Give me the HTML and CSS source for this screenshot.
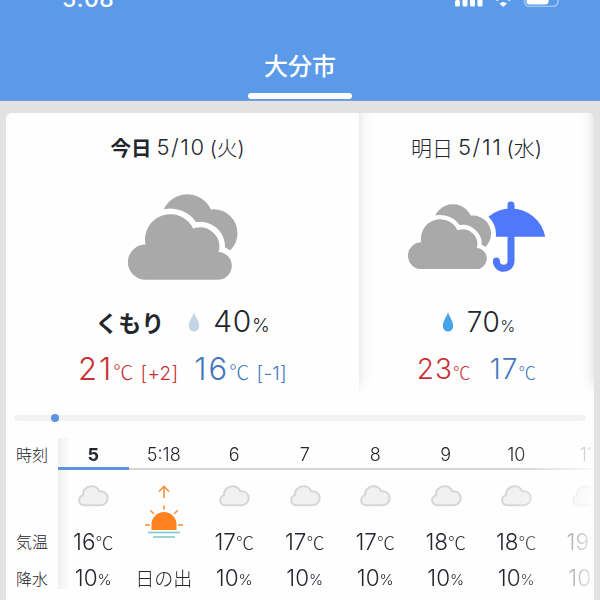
FILE: index.html
```
<!DOCTYPE html>
<html lang="ja">
<head>
  <meta charset="UTF-8" />
  <meta name="viewport" content="width=device-width, initial-scale=1.0" />
  <title>大分市の天気</title>
  <link rel="stylesheet" href="styles.css">
</head>
<body>
  <!-- Shared icons -->
  <svg class="icon-defs" width="0" height="0">
    <symbol id="clouds" viewBox="-0.600 0 110.600 86">
      <g fill="#a9a9a9">
        <circle cx="59" cy="26" r="26" />
        <circle cx="85.500" cy="39" r="24" />
        <path d="M40 26h46v26l14 6-30 5H40z" />
      </g>
      <path d="M17 86a17.500 17.500 0 0 1 0-35.500A25.500 25.500 0 0 1 65 34.500A19.500 19.500 0 0 1 90.500 58A14 14 0 0 1 89 86Z" fill="#a9a9a9" stroke="#fff" stroke-width="11.500" paint-order="stroke" />
    </symbol>
    <symbol id="drop" viewBox="0 0 12 20">
      <path d="M6 0C5 4.500.8 9 .8 14a5.200 5.600 0 0 0 10.400 0C11.200 9 7 4.500 6 0z" fill="currentColor" />
    </symbol>
    <symbol id="cloud" viewBox="0 0 32 22">
      <path d="M6.500 20.200a5 5 0 0 1-.6-9.800C5.400 5.500 9.500 1.300 14.500 1.300c3.600 0 6.500 2 7.700 5 4.600-.7 8.500 2.400 8.500 6.800 0 4-3 7.100-7 7.100z" fill="#f1f1f1" stroke="#d6d6d6" stroke-width="2" />
    </symbol>
  </svg>

  <!-- Header -->
  <header class="header">
    <div class="status-bar">
      <span class="clock">5:08</span>
      <svg class="status-icons" width="108" height="24" viewBox="0 0 108 24" fill="#fff">
        <rect x="0" y="17" width="5" height="6.500" rx="1.500" />
        <rect x="7.500" y="13" width="5" height="10.500" rx="1.500" />
        <rect x="15" y="9" width="5" height="14.500" rx="1.500" />
        <rect x="22.500" y="5" width="5" height="18.500" rx="1.500" />
        <path d="M44.500 20.500q3.700-3 7.400 0L48.200 24z" />
        <path d="M41.300 17.300q6.900-6 13.800 0" fill="none" stroke="#fff" stroke-width="2.500" />
        <rect x="69.500" y="6" width="33.500" height="17.500" rx="5" fill="none" stroke="#a5c8f3" stroke-width="1.500" />
        <rect x="71.500" y="8" width="22" height="13.500" rx="3" />
        <path d="M105 11q3 3 0 6z" fill="#a5c8f3" />
      </svg>
    </div>
    <div class="city-tab">大分市</div>
  </header>

  <!-- Weather Card -->
  <main class="card">
    <section class="days">
      <div class="day today">
        <h2 class="date"><b>今日</b><span class="num">5/10</span><span class="week">(火)</span></h2>
        <div class="day-icon">
          <svg width="110" height="86"><use href="#clouds" /></svg>
        </div>
        <div class="rain">
          <span class="condition">くもり</span>
          <svg class="drop low" width="12" height="20"><use href="#drop" /></svg>
          <span class="chance">40<small>%</small></span>
        </div>
        <div class="temps">
          <span class="high">21<small class="unit">℃</small><small class="diff">[+2]</small></span>
          <span class="low-temp">16<small class="unit">℃</small><small class="diff">[-1]</small></span>
        </div>
      </div>

      <div class="day tomorrow">
        <h2 class="date">明日<span class="num">5/11</span><span class="week">(水)</span></h2>
        <div class="day-icon">
          <svg width="138" height="72" viewBox="408 202 138 72">
            <path d="M476.800 237.800a34.800 34.800 0 0 1 68.400 0z" fill="#5078fa" />
            <path d="M511 206v56a7.300 7.300 0 0 1-14.600 0" fill="none" stroke="#5078fa" stroke-width="7" stroke-linecap="round" />
            <g fill="#fff">
              <circle cx="453" cy="225" r="25" />
              <circle cx="472.500" cy="235" r="23.500" />
            </g>
            <use href="#clouds" x="408" y="205" width="83.500" height="65.300" />
          </svg>
        </div>
        <div class="rain">
          <svg class="drop" width="12" height="20"><use href="#drop" /></svg>
          <span class="chance">70<small>%</small></span>
        </div>
        <div class="temps">
          <span class="high">23<small class="unit">℃</small></span>
          <span class="low-temp">17<small class="unit">℃</small></span>
        </div>
      </div>
    </section>

    <div class="slider"><span class="knob"></span></div>

    <!-- Hourly forecast -->
    <section class="hourly">
      <div class="labels">
        <span class="time">時刻</span>
        <span class="icon"></span>
        <span class="temp">気温</span>
        <span class="pop">降水</span>
      </div>
      <div class="hours">
        <div class="hour current">
          <span class="time">5</span>
          <span class="icon"><svg width="32" height="22"><use href="#cloud" /></svg></span>
          <span class="temp">16<small>℃</small></span>
          <span class="pop">10<small>%</small></span>
        </div>
        <div class="hour sunrise">
          <span class="time">5:18</span>
          <span class="icon">
            <svg width="40" height="54" viewBox="0 0 40 54" fill="none" stroke="#f5913a" stroke-width="1.600">
              <path d="M20 13V1.500M15 6.500l5-5 5 5" />
              <path d="M20 20.500v4M6.500 25.500l3.300 3.300M33.500 25.500l-3.300 3.300M1 40h5M34 40h5" />
              <path d="M7.500 45v-5.500a12.500 12.500 0 0 1 25 0v5.500z" fill="#ff8120" stroke="none" />
              <path d="M4 47.500h32M9 52h22" stroke="#7cc8c6" />
            </svg>
          </span>
          <span class="pop">日の出</span>
        </div>
        <div class="hour">
          <span class="time">6</span>
          <span class="icon"><svg width="32" height="22"><use href="#cloud" /></svg></span>
          <span class="temp">17<small>℃</small></span>
          <span class="pop">10<small>%</small></span>
        </div>
        <div class="hour">
          <span class="time">7</span>
          <span class="icon"><svg width="32" height="22"><use href="#cloud" /></svg></span>
          <span class="temp">17<small>℃</small></span>
          <span class="pop">10<small>%</small></span>
        </div>
        <div class="hour">
          <span class="time">8</span>
          <span class="icon"><svg width="32" height="22"><use href="#cloud" /></svg></span>
          <span class="temp">17<small>℃</small></span>
          <span class="pop">10<small>%</small></span>
        </div>
        <div class="hour">
          <span class="time">9</span>
          <span class="icon"><svg width="32" height="22"><use href="#cloud" /></svg></span>
          <span class="temp">18<small>℃</small></span>
          <span class="pop">10<small>%</small></span>
        </div>
        <div class="hour">
          <span class="time">10</span>
          <span class="icon"><svg width="32" height="22"><use href="#cloud" /></svg></span>
          <span class="temp">18<small>℃</small></span>
          <span class="pop">10<small>%</small></span>
        </div>
        <div class="hour">
          <span class="time">11</span>
          <span class="icon"><svg width="32" height="22"><use href="#cloud" /></svg></span>
          <span class="temp">19<small>℃</small></span>
          <span class="pop">10<small>%</small></span>
        </div>
      </div>
    </section>
  </main>
</body>
</html>
```
FILE: styles.css
```
* {
  margin: 0;
  padding: 0;
  box-sizing: border-box;
}

body {
  font-family: Inter, "Noto Sans CJK JP", sans-serif;
  font-weight: 300;
  background: #e2e2e2;
  color: #23262d;
  width: 600px;
  height: 600px;
  overflow: hidden;
}

.icon-defs {
  display: block;
}

/* Header */
.header {
  height: 101px;
  background: #5a9ae8;
  border-bottom: 1px solid #7b9fce;
  color: #fff;
  overflow: hidden;
  display: flex;
  flex-direction: column;
  align-items: center;
}

.status-bar {
  width: 100%;
  height: 30px;
  margin-top: -17px;
  padding: 0 37px 0 62px;
  display: flex;
  flex-shrink: 0;
  justify-content: space-between;
  align-items: flex-start;
}

.clock {
  font-size: 23px;
  line-height: 32px;
  font-weight: 500;
  letter-spacing: 0.4px;
}

.city-tab {
  display: flex;
  flex-direction: column;
  align-items: center;
  width: 104px;
  height: 86px;
  padding-top: 36px;
  font-size: 24px;
  line-height: 36px;
  font-weight: 500;
}

.city-tab::after {
  content: "";
  width: 104px;
  height: 6px;
  margin-top: 8px;
  background: #fff;
  border-radius: 3px;
}

/* Card */
.card {
  height: 487px;
  margin: 12px 6px 0;
  background: #fefefe;
  border-radius: 6px 6px 0 0;
  overflow: hidden;
}

.days {
  display: flex;
  height: 284px;
}

.day {
  display: flex;
  flex-direction: column;
  align-items: center;
}

.today {
  width: 353px;
}

.tomorrow {
  width: 235px;
  background:
    linear-gradient(to bottom, transparent 260px, #fefefe 283px),
    linear-gradient(to right, #ececec, #f8f8f8 5px, #fefefe 13px, #fefefe 222px, #f8f8f8 229px, #e8e8e8);
}

.date {
  display: flex;
  align-items: center;
  height: 30px;
  margin-top: 19px;
  font-size: 20.5px;
  font-weight: 300;
}

.date b {
  font-weight: 700;
}

.today .date {
  margin-right: 10px;
}

.tomorrow .date {
  font-size: 21px;
}

.num {
  margin: 0 4px 0 5px;
  font-size: 22px;
  letter-spacing: 1.6px;
}

.day-icon {
  display: flex;
  justify-content: center;
  align-items: center;
  height: 125px;
  padding-top: 25px;
}

.rain {
  display: flex;
  align-items: center;
  height: 40px;
  margin-top: 15px;
}

.condition {
  font-size: 23px;
  font-weight: 700;
  margin-right: 24px;
}

.drop {
  color: #47a3e8;
  margin-right: 13px;
}

.drop.low {
  color: #c3d5e4;
}

.chance {
  font-size: 30px;
  line-height: 40px;
  letter-spacing: 0.6px;
  padding-top: 3px;
}

.chance small {
  font-size: 19px;
  letter-spacing: 0;
}

.tomorrow .rain {
  padding-left: 4px;
}

.tomorrow .chance {
  font-size: 28px;
}

.tomorrow .chance small {
  font-size: 16px;
}

.temps {
  display: flex;
  gap: 16px;
  height: 46px;
  margin-top: 4px;
  font-size: 31px;
  line-height: 46px;
  letter-spacing: 2px;
}

.temps small {
  font-size: 19px;
  letter-spacing: 0.3px;
}

.temps .unit {
  font-family: "Noto Sans CJK JP", sans-serif;
  font-size: 20px;
  line-height: 20px;
}

.temps .diff {
  margin-left: 7px;
}

.tomorrow .temps {
  gap: 19px;
  font-size: 28px;
  letter-spacing: 1px;
}

.tomorrow .temps .unit {
  font-size: 17.5px;
}

.high {
  color: #c92f35;
}

.low-temp {
  color: #4477bd;
}

/* Slider */
.slider {
  display: flex;
  align-items: center;
  height: 6px;
  margin: 17px 8px 0;
  padding-left: 37px;
  background: #f3f3f3;
  border-radius: 3px;
  margin-top: 18px;
}

.knob {
  width: 8px;
  height: 8px;
  border-radius: 50%;
  background: #5c94e0;
}

/* Hourly forecast */
.hourly {
  display: flex;
  margin-top: 17px;
}

.labels {
  width: 52px;
  padding-left: 10px;
  font-size: 16px;
}

.labels span,
.hour span {
  display: flex;
  justify-content: center;
  align-items: center;
}

.labels span {
  justify-content: flex-start;
}

.hours {
  display: flex;
  width: 533px;
  height: 157px;
  overflow: hidden;
  background: linear-gradient(to right, #efeff2, transparent 12px) no-repeat;
  background-size: 100% 151px;
  -webkit-mask-image: linear-gradient(to right, #000 455px, transparent 545px);
  mask-image: linear-gradient(to right, #000 455px, transparent 545px);
}

.hour {
  flex: 0 0 70.5px;
}

.labels .time,
.hour .time {
  height: 32px;
}

.hour .time {
  font-size: 18px;
  padding-top: 3px;
  border-bottom: 2px solid #d3d3d3;
}

.hour.current .time {
  font-weight: 700;
  border-bottom: 3px solid #5c94e0;
}

.icon {
  height: 52px;
}

.sunrise .icon {
  height: 84px;
}

.temp {
  height: 38px;
}

.hour .temp {
  font-size: 22.5px;
}

.temp small {
  font-family: "Noto Sans CJK JP", sans-serif;
  font-size: 18px;
  line-height: 20px;
  padding-top: 1px;
}

.pop {
  height: 35px;
}

.hour .pop {
  font-size: 22.5px;
}

.pop small {
  font-size: 15px;
  padding-top: 4px;
}

.hour.sunrise .pop {
  height: 41px;
  padding-top: 5px;
  font-size: 19px;
}
```
